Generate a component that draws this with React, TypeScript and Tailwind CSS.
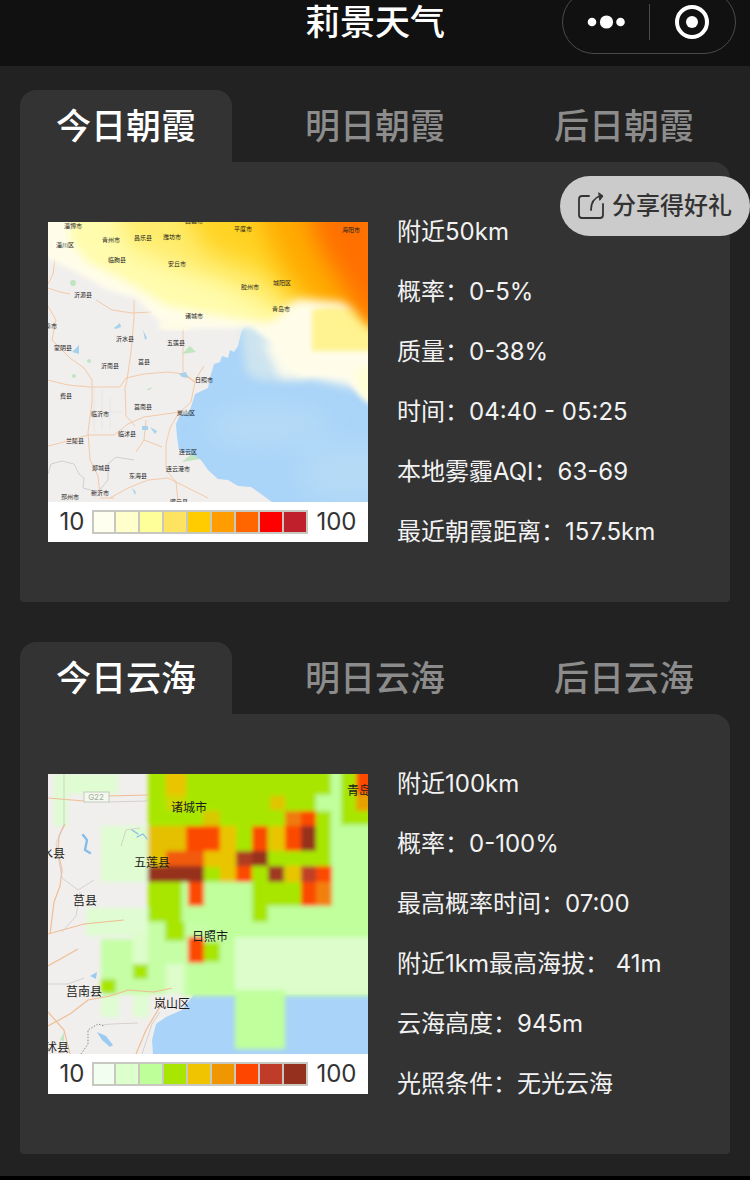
import { useState } from "react"
import type { ReactNode } from "react"

type Label = [text: string, x: number, y: number]
type Cell = [x: number, y: number, w: number, h: number, fill: string]

const GLOW_LABELS: Label[] = [
  ["昌邑市", 146, -1], ["淄博市", 25, 4], ["淄川区", 17, 23], ["青州市", 63, 18],
  ["昌乐县", 95, 16], ["潍坊市", 124, 15], ["临朐县", 69, 38], ["安丘市", 129, 42],
  ["沂源县", 35, 73], ["诸城市", 146, 94], ["新泰市", 0, 104], ["蒙阴县", 15, 126],
  ["沂水县", 77, 117], ["五莲县", 128, 121], ["沂南县", 62, 144], ["莒县", 96, 140],
  ["日照市", 156, 158], ["平度市", 195, 7], ["海阳市", 303, 8], ["胶州市", 202, 65],
  ["城阳区", 234, 61], ["青岛市", 233, 87], ["费县", 18, 174], ["莒南县", 95, 185],
  ["临沂市", 52, 192], ["临沭县", 79, 212], ["兰陵县", 27, 219], ["岚山区", 138, 191],
  ["连云区", 140, 230], ["连云港市", 130, 247], ["郯城县", 53, 246], ["东海县", 90, 254],
  ["新沂市", 52, 271], ["邳州市", 22, 275], ["灌云县", 131, 280],
]

const CLOUD_LABELS: Label[] = [
  ["诸城市", 141, 34], ["五莲县", 104, 89], ["莒县", 37, 127], ["沂水县", -1, 80],
  ["日照市", 162, 163], ["莒南县", 36, 218], ["岚山区", 124, 230], ["临沭县", 3, 274],
  ["青岛市", 317, 17],
]

const CLOUD_CELLS: Cell[] = [
  // faint cover over the land
  [6, 0, 64, 20, "#dffcd2"], [6, 20, 14, 32, "#dffcd2"], [53, 52, 49, 56, "#dffcd2"],
  [38, 134, 82, 28, "#dffcd2"], [53, 220, 18, 23, "#dffcd2"], [85, 220, 16, 23, "#dffcd2"],
  // light cover
  [134, -6, 192, 228, "#c0ff9b"], [53, 165, 90, 55, "#c6fea6"], [100, 148, 60, 20, "#c6fea6"],
  [187, 163, 140, 57, "#ddfdcb"], [187, 216, 50, 59, "#c0ff9b"],
  [85, 160, 15, 30, "#ddfdcb"], [118, 190, 18, 30, "#ddfdcb"],
  // green
  [100, -6, 183, 98, "#a8e600"], [100, 90, 90, 18, "#a8e600"], [100, 106, 34, 42, "#a8e600"],
  [117, 148, 20, 19, "#a8e600"], [204, 90, 79, 42, "#a8e600"], [204, 132, 16, 16, "#a8e600"],
  [293, -6, 33, 57, "#a8e600"], [268, 21, 18, 16, "#c0ff9b"], [155, 168, 17, 20, "#a8e600"],
  [85, 190, 15, 15, "#a8e600"], [53, 205, 15, 15, "#a8e600"],
  // amber
  [118, -6, 20, 27, "#e9c400"], [118, 21, 20, 15, "#cfd800"], [100, 52, 38, 40, "#e4c000"],
  [155, 37, 17, 15, "#d8c800"], [155, 77, 17, 16, "#e9c400"], [172, 52, 16, 56, "#e9c400"],
  [222, 22, 15, 14, "#e0c400"], [222, 52, 15, 25, "#e9c400"], [237, 92, 16, 16, "#e9c400"],
  [237, 37, 16, 16, "#f07a10"], [268, 108, 16, 24, "#f28010"], [308, 20, 18, 17, "#e8a000"],
  // red
  [138, 52, 34, 25, "#fc4a05"], [118, 77, 38, 16, "#f25a0a"], [204, 52, 16, 25, "#fc4a05"],
  [237, 52, 16, 25, "#fc4a05"], [253, 37, 15, 15, "#fc4a05"], [188, 92, 16, 16, "#fc4a05"],
  [253, 108, 15, 24, "#fc4a05"], [268, 92, 16, 16, "#fc4a05"], [140, 106, 16, 26, "#fc4a05"],
  [308, -6, 18, 26, "#fc4a05"], [140, 163, 16, 26, "#fc4a05"],
  // dark
  [100, 92, 56, 16, "#96301e"], [188, 77, 16, 15, "#ad3c24"], [204, 77, 16, 15, "#96301e"],
  [253, 52, 15, 25, "#96301e"], [220, 92, 16, 16, "#a03822"], [253, 92, 15, 16, "#bf4028"],
]

const GLOW_SCALE = [
  "bg-[#fffff0]", "bg-[#ffffcc]", "bg-[#ffff99]", "bg-[#fde360]", "bg-[#ffcc00]",
  "bg-[#ff9c00]", "bg-[#ff6600]", "bg-[#ff0000]", "bg-[#c0202c]",
]

const CLOUD_SCALE = [
  "bg-[#f2fff0]", "bg-[#dcffcc]", "bg-[#bfff99]", "bg-[#a8e600]", "bg-[#f0c400]",
  "bg-[#f09600]", "bg-[#ff4600]", "bg-[#be3c28]", "bg-[#96301e]",
]

function MapLabels({ labels, size }: { labels: Label[]; size: number }) {
  return (
    <g fill="#1c1c1c" fontSize={size} textAnchor="middle">
      {labels.map(([text, x, y]) => (
        <text key={text} x={x} y={y + size * 0.37}>{text}</text>
      ))}
    </g>
  )
}

function GlowMap() {
  return (
    <svg viewBox="0 0 320 280" className="block w-full" role="img" aria-label="朝霞地图">
      <defs>
        <filter id="soft" x="-20%" y="-20%" width="140%" height="140%">
          <feGaussianBlur stdDeviation="5" />
        </filter>
        <filter id="softer" x="-30%" y="-30%" width="160%" height="160%">
          <feGaussianBlur stdDeviation="12" />
        </filter>
        <filter id="edge" x="-10%" y="-10%" width="120%" height="120%">
          <feGaussianBlur stdDeviation="2.5" />
        </filter>
        <mask id="glow-area" maskUnits="userSpaceOnUse" x="0" y="0" width="320" height="280">
          <path d="M-20-20H340V112C314 112 308 84 292 80L252 77C238 80 230 98 220 104L112 106L88 82L60 74L36 56L14 40L-20 20Z" fill="#fff" filter="url(#soft)" />
        </mask>
      </defs>
      <rect width="320" height="280" fill="#f1efed" />
      <path
        d="M200 95L193 112L190 124L186 130L182 128L180 136L174 134L172 140L166 142L163 152L160 166L147 172L143 185L140 191L132 193L128 202L129 215L131 228L143 233L153 238L160 248L170 257L180 258L190 264L203 265L213 272L224 280H320V90Z"
        fill="#aad4f8"
      />
      {/* Roads */}
      <g fill="none" stroke="#f3c9a8" strokeWidth="1">
        <path d="M8 28L5 52L0 62M0 66L12 70L22 72M48 78L64 88L84 91L104 90" />
        <path d="M86 78V96L83 130L79 158L77 166L78 194L87 204M0 84L8 98L4 118L22 136L36 146L44 158V180L40 210L42 238L50 254L52 272" />
        <path d="M0 158L20 163L42 165L72 165L78 156L96 152L120 150L136 152L146 160L156 144M135 100V150L147 160L143 180L130 192L122 206L118 222V248L128 260L130 280" />
        <path d="M0 224L20 219L40 213L66 213L80 202L96 195L132 190M88 230L96 218L98 198M96 218L114 225M62 276L80 266L100 258L120 256L140 266L160 276M52 276H66" />
      </g>
      <g fill="none" stroke="#c9c4cc" strokeWidth="0.8">
        <path d="M0 252L3 242L14 239L26 242L31 252L36 256L35 266L50 270L60 258V242L68 235L86 238" />
        <path d="M46 166V210M54 168V208M62 176V206M44 190H74" stroke="#e6e1de" />
      </g>
      <g fill="#a6d2ee">
        <path d="M66 106L72 101L73 105L68 107ZM95 108L99 116L97 118ZM24 130L31 123L31 132ZM102 205L109 209L107 212ZM94 204H100V208H94ZM84 266L88 270L87 273ZM131 152L138 150L140 156L134 155Z" />
      </g>
      <g fill="#bfe6c0">
        <circle cx="25" cy="61" r="3" />
        <circle cx="26" cy="154" r="2" />
        <circle cx="41" cy="139" r="2" />
        <path d="M134 132L142 124L148 130ZM98 168L104 165L102 168ZM134 240L144 232L152 237Z" />
      </g>
      {/* Thin haze over the bay */}
      <path d="M192 100H260V158H210L198 150Z" fill="#d6e8ee" opacity="0.8" filter="url(#soft)" />
      <path d="M215 120H340V172L300 164L262 156H232Z" fill="#fdfbec" filter="url(#soft)" />
      <ellipse cx="220" cy="205" rx="60" ry="22" fill="#bfe0f4" opacity="0.5" filter="url(#softer)" />
      <ellipse cx="300" cy="250" rx="50" ry="30" fill="#bfe0f4" opacity="0.5" filter="url(#softer)" />
      {/* Glow bands, palest first */}
      <path d="M-20-20H340V188C308 182 306 160 296 154H250L222 120L204 106L180 106L134 106L110 98L88 76L60 68L36 54L-20 26Z" fill="#fffdea" filter="url(#edge)" />
      <path d="M264 88C290 80 340 90 340 129H264Z" fill="#fff391" filter="url(#edge)" />
      <path d="M308 146H340V182C314 178 308 164 308 146Z" fill="#ffffd2" filter="url(#soft)" />
      <g mask="url(#glow-area)">
        <path d="M24-20H340V116L215 102L120 84L80 60L40 40L22 18Z" fill="#fffcae" filter="url(#soft)" />
        <path d="M66-20H340V110L226 88L180 62L120 42L80 24Z" fill="#ffec6c" filter="url(#softer)" />
        <path d="M130-20H340V110L254 88L215 50L160 30Z" fill="#ffd322" filter="url(#softer)" />
        <path d="M205-20H340V130L262 84L230 38Z" fill="#ffaa04" filter="url(#softer)" />
        <path d="M256-20H340V130L308 84L272 26Z" fill="#ff7000" filter="url(#softer)" />
      </g>
      <path d="M112 108H146L134 100L112 98Z" fill="#fffde6" filter="url(#edge)" />
      <MapLabels labels={GLOW_LABELS} size={6} />
    </svg>
  )
}

function CloudMap() {
  return (
    <svg viewBox="0 0 320 280" className="block w-full" role="img" aria-label="云海地图">
      <defs>
        <filter id="cell-blur" x="-5%" y="-5%" width="110%" height="110%">
          <feGaussianBlur stdDeviation="2.2" />
        </filter>
      </defs>
      <rect width="320" height="280" fill="#f1efed" />
      <path d="M105 280L104 266L108 250L118 243L134 236L146 220H320V280Z" fill="#a9d3f8" />
      <g filter="url(#cell-blur)">
        {CLOUD_CELLS.map(([x, y, w, h, fill]) => (
          <rect key={`${x}-${y}-${w}`} x={x} y={y} width={w} height={h} fill={fill} />
        ))}
      </g>
      <g fill="none" stroke="#f0bd94" strokeWidth="1.2">
        <path d="M0 24L36 27M60 22L100 21" />
        <path d="M17 50L11 62L10 78L14 96L12 112L6 128L2 160M0 160L36 150L76 146" />
        <path d="M0 192L30 175M0 252L22 240L40 226L62 222L80 216L106 218L124 214M0 238L16 256L22 280M88 280L98 256L110 236L116 226" />
      </g>
      <g fill="none" stroke="#cfc8c8" strokeWidth="0.8">
        <path d="M16 0V50L8 70L14 104L30 116L46 106M32 118L28 142L14 158M60 28L100 27M73 72L78 56L92 54M0 210L20 210L36 204M94 280L104 250L112 238" />
        <path d="M54 251L64 250L90 249" />
      </g>
      <path d="M33 280L40 270V256L50 250L56 252" fill="none" stroke="#8a8a94" strokeWidth="1" strokeDasharray="1.5 1.5" />
      <g fill="none" stroke="#86bdea" strokeWidth="2.4" strokeLinecap="round">
        <path d="M35 61L39 66L37 76L42 79" />
        <path d="M84 56L90 60M89 63L95 60L99 65" strokeWidth="1.2" />
      </g>
      <path d="M49 258L58 262L65 271L62 273L54 266ZM42 202L49 198L48 205Z" fill="#9ccbf2" />
      <path d="M12 266L16 258V267Z" fill="#bfe6c0" />
      <g>
        <rect x="36" y="18" width="25" height="10" fill="#f4f8ef" stroke="#b9c4b2" strokeWidth="0.8" />
        <text x="48" y="26" fontSize="8" textAnchor="middle" fill="#a3ae9c">G22</text>
      </g>
      <MapLabels labels={CLOUD_LABELS} size={12} />
    </svg>
  )
}

function Legend({ colors }: { colors: string[] }) {
  return (
    <div className="flex h-10 items-center justify-center gap-2 bg-white text-2xl text-[#333]">
      <span>10</span>
      <div className="flex">
        {colors.map((color) => (
          <span key={color} className={`h-6 w-6 border-y-2 border-r-2 border-[#c8c8c0] first:border-l-2 ${color}`} />
        ))}
      </div>
      <span>100</span>
    </div>
  )
}

interface ForecastCardProps {
  label: string
  tabs: string[]
  rows: string[]
  colors: string[]
  children: ReactNode
}

function ForecastCard({ label, tabs, rows, colors, children }: ForecastCardProps) {
  const [active, setActive] = useState(0)

  return (
    <section>
      <div role="tablist" aria-label={label} className="flex justify-between">
        {tabs.map((tab, index) => (
          <button
            key={tab}
            type="button"
            role="tab"
            aria-selected={index === active}
            onClick={() => setActive(index)}
            className={`h-[72px] cursor-pointer rounded-t-2xl px-9 text-[35px] font-medium ${
              index === active ? "bg-[#333] text-white" : "text-[#8c8c8c]"
            }`}
          >
            {tab}
          </button>
        ))}
      </div>
      <div role="tabpanel" className="flex gap-[29px] rounded-tr-2xl rounded-b bg-[#333] py-10 pl-7 pr-4">
        <div className="w-80 shrink-0 self-start pt-5">
          {children}
          <Legend colors={colors} />
        </div>
        <ul className="min-w-0 flex-1 text-2xl leading-[60px] text-[#f2f2f2]">
          {rows.map((row) => (
            <li key={row} className="whitespace-nowrap">{row}</li>
          ))}
        </ul>
      </div>
    </section>
  )
}

export default function App() {
  return (
    <div className="relative flex min-h-screen flex-col overflow-hidden bg-black font-[Inter,'Noto_Sans_CJK_SC',sans-serif]">
      <header className="-mt-[22px] grid h-[88px] grid-cols-[1fr_auto_1fr] items-center bg-[#111]">
        <h1 className="col-start-2 text-[35px] font-medium text-white">莉景天气</h1>
        <div className="mr-3.5 flex h-16 w-[174px] items-center justify-self-end rounded-full border border-[#4a4a4a]">
          <button type="button" aria-label="更多" className="flex flex-1 cursor-pointer justify-center">
            <svg width="38" height="14" viewBox="0 0 38 14" fill="#fff">
              <circle cx="5" cy="7" r="4.3" />
              <circle cx="19.500" cy="7" r="6.6" />
              <circle cx="33.500" cy="7" r="4.3" />
            </svg>
          </button>
          <span className="h-9 w-px bg-[#4a4a4a]" />
          <button type="button" aria-label="关闭" className="flex flex-1 cursor-pointer justify-center">
            <svg width="34" height="34" viewBox="0 0 34 34">
              <circle cx="17" cy="17" r="15" fill="none" stroke="#fff" strokeWidth="4" />
              <circle cx="17" cy="17" r="6" fill="#fff" />
            </svg>
          </button>
        </div>
      </header>

      <main className="flex flex-col gap-10 bg-[#222] px-5 pt-6 pb-[22px]">
        <ForecastCard
          label="朝霞"
          tabs={["今日朝霞", "明日朝霞", "后日朝霞"]}
          rows={[
            "附近50km",
            "概率：0-5%",
            "质量：0-38%",
            "时间：04:40 - 05:25",
            "本地雾霾AQI：63-69",
            "最近朝霞距离：157.5km",
          ]}
          colors={GLOW_SCALE}
        >
          <GlowMap />
        </ForecastCard>
        <ForecastCard
          label="云海"
          tabs={["今日云海", "明日云海", "后日云海"]}
          rows={[
            "附近100km",
            "概率：0-100%",
            "最高概率时间：07:00",
            "附近1km最高海拔： 41m",
            "云海高度：945m",
            "光照条件：无光云海",
          ]}
          colors={CLOUD_SCALE}
        >
          <CloudMap />
        </ForecastCard>
      </main>

      <button
        type="button"
        className="absolute top-44 right-0 flex h-[60px] cursor-pointer items-center gap-2 rounded-full bg-[#cbcbcb] px-[18px] text-2xl font-medium text-[#333]"
      >
        <svg width="26" height="28" viewBox="0 0 26 28" fill="none" stroke="#333" strokeWidth="1.8" strokeLinecap="round">
          <path d="M11 4H4Q1 4 1 7V23Q1 26 4 26H22Q25 26 25 23V12" />
          <path d="M13 18Q13 7 22 4" />
          <path d="M21 1L25 4L22 8Z" fill="#333" strokeWidth="1" />
        </svg>
        分享得好礼
      </button>
    </div>
  )
}
